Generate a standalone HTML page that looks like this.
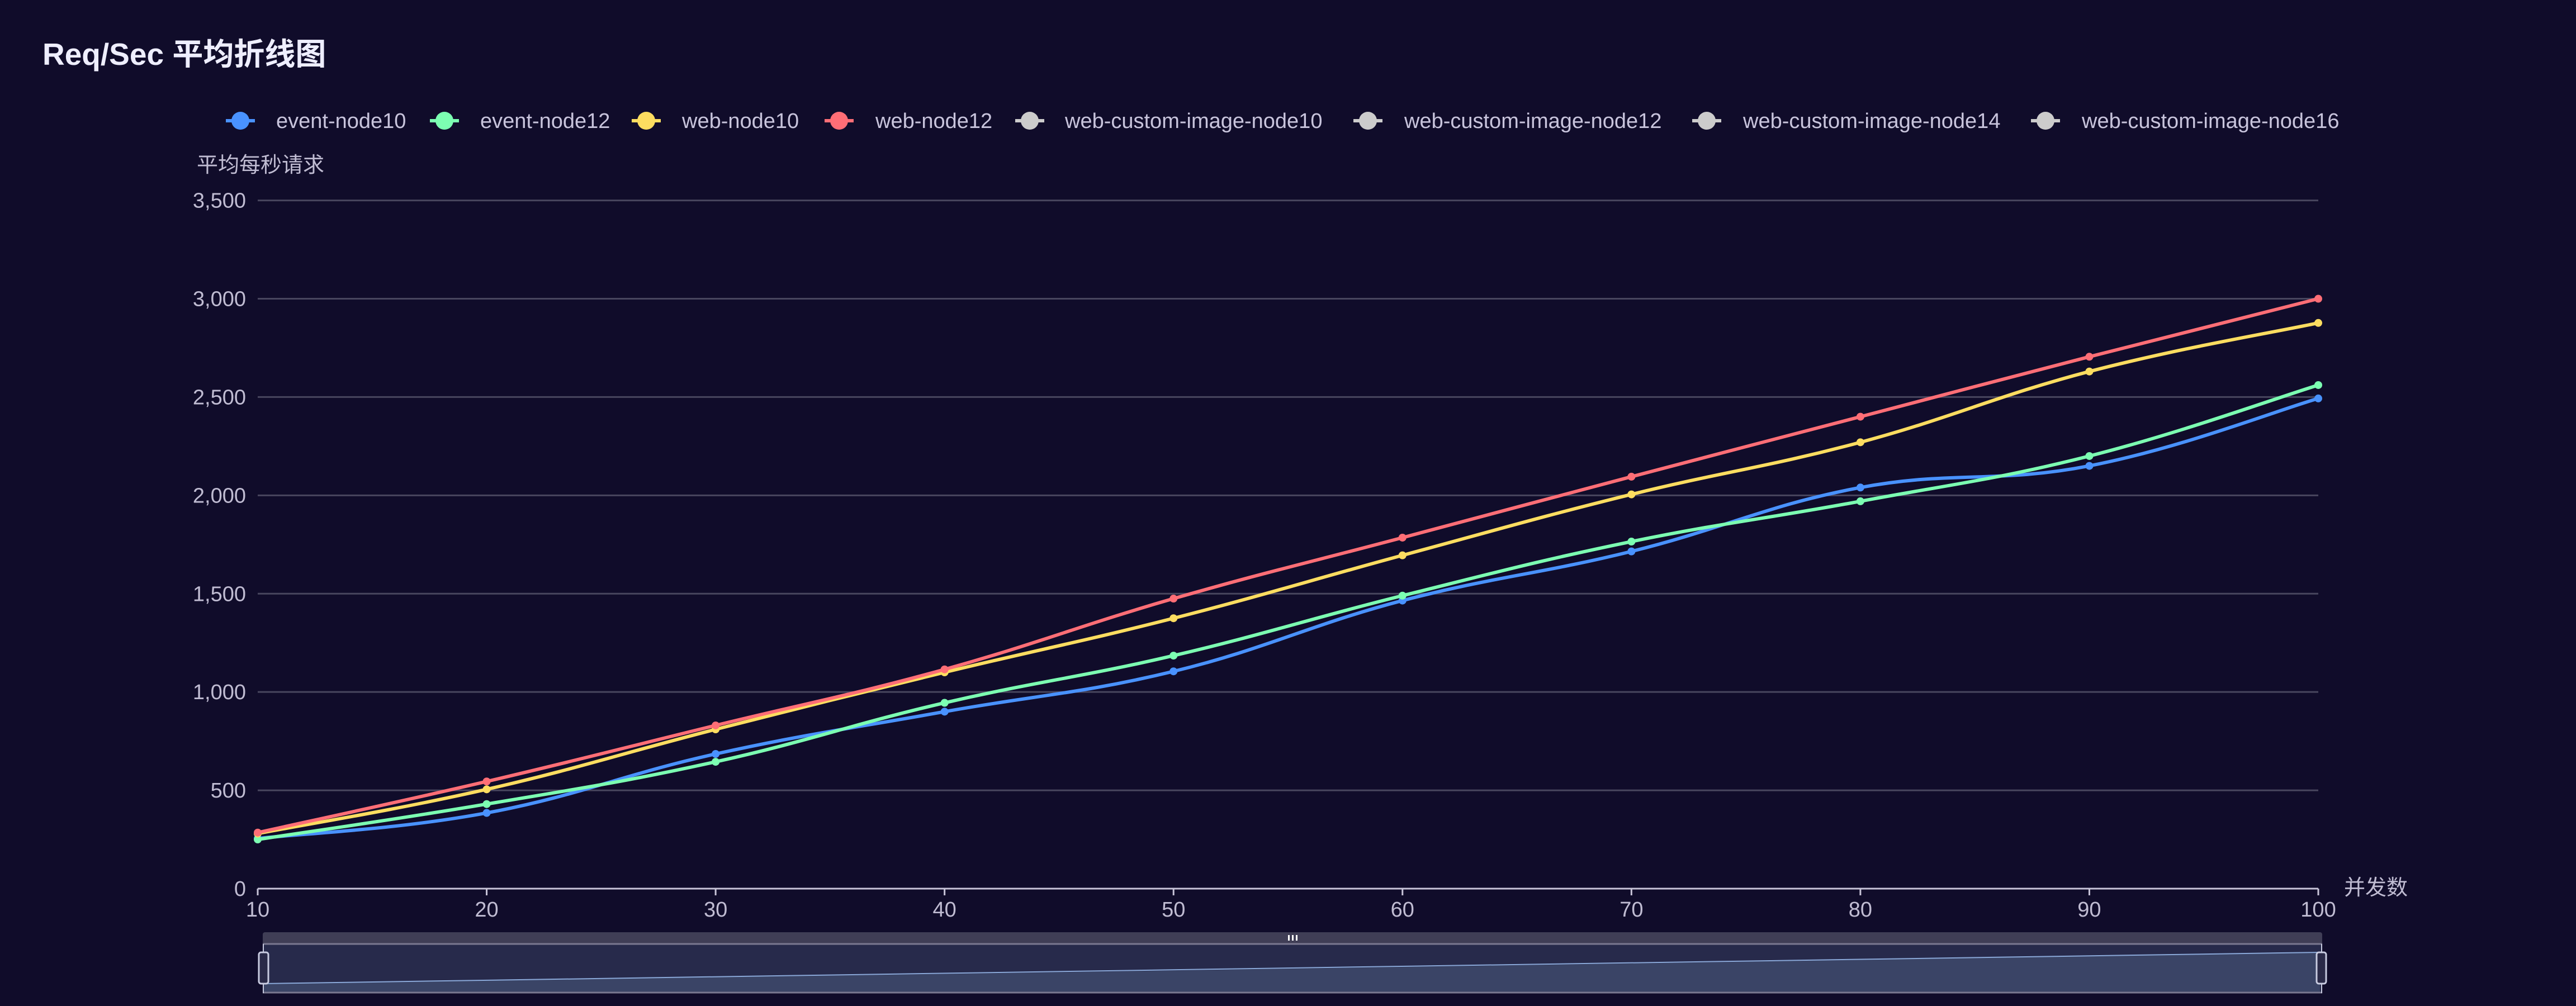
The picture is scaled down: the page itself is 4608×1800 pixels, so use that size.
<!DOCTYPE html>
<html><head><meta charset="utf-8"><style>
html,body{margin:0;padding:0;background:#100c2a;width:4608px;height:1800px;overflow:hidden}
svg{display:block}
text{font-family:"Liberation Sans","Noto Sans CJK SC",sans-serif}
</style></head><body>
<svg id="s" width="4608" height="1800" viewBox="0 0 4608 1800">
<rect width="4608" height="1800" fill="#100c2a"/>
<text x="76" y="116" font-size="55" font-weight="bold" fill="#eeeeff">Req/Sec 平均折线图</text>
<g font-size="38" fill="#c8c4dc">
<g><line x1="404" y1="216" x2="456" y2="216" stroke="#4992ff" stroke-width="6"/><circle cx="430" cy="216" r="16" fill="#4992ff"/><text x="494" y="229">event-node10</text></g>
<g><line x1="769" y1="216" x2="821" y2="216" stroke="#7cffb2" stroke-width="6"/><circle cx="795" cy="216" r="16" fill="#7cffb2"/><text x="859" y="229">event-node12</text></g>
<g><line x1="1130" y1="216" x2="1182" y2="216" stroke="#fddd60" stroke-width="6"/><circle cx="1156" cy="216" r="16" fill="#fddd60"/><text x="1220" y="229">web-node10</text></g>
<g><line x1="1475" y1="216" x2="1527" y2="216" stroke="#ff6e76" stroke-width="6"/><circle cx="1501" cy="216" r="16" fill="#ff6e76"/><text x="1566" y="229">web-node12</text></g>
<g><line x1="1816" y1="216" x2="1868" y2="216" stroke="#cccccc" stroke-width="6"/><circle cx="1842" cy="216" r="16" fill="#cccccc"/><text x="1905" y="229">web-custom-image-node10</text></g>
<g><line x1="2421" y1="216" x2="2473" y2="216" stroke="#cccccc" stroke-width="6"/><circle cx="2447" cy="216" r="16" fill="#cccccc"/><text x="2512" y="229">web-custom-image-node12</text></g>
<g><line x1="3027" y1="216" x2="3079" y2="216" stroke="#cccccc" stroke-width="6"/><circle cx="3053" cy="216" r="16" fill="#cccccc"/><text x="3118" y="229">web-custom-image-node14</text></g>
<g><line x1="3633" y1="216" x2="3685" y2="216" stroke="#cccccc" stroke-width="6"/><circle cx="3659" cy="216" r="16" fill="#cccccc"/><text x="3724" y="229">web-custom-image-node16</text></g>
</g>
<text x="352" y="308" font-size="38" fill="#c0bcd2">平均每秒请求</text>
<g id="grid" stroke="#48465e" stroke-width="3"></g>
<g id="ylab" font-size="38" fill="#c0bcd2" text-anchor="end"></g>
<line x1="461" y1="1590" x2="4147" y2="1590" stroke="#c8c4d8" stroke-width="3"/>
<g id="xt" stroke="#c8c4d8" stroke-width="3"></g>
<g id="xlab" font-size="38" fill="#c0bcd2" text-anchor="middle"></g>
<text x="4193" y="1601" font-size="38" fill="#c0bcd2">并发数</text>
<g id="series"></g>
<rect x="470" y="1668" width="3684" height="22" rx="4" fill="#403e56"/>
<rect x="470" y="1689" width="3684" height="88" fill="#272a4b"/>
<path d="M470 1760 Q2300 1735 4150 1704 L4150 1776 L470 1776Z" fill="#3a4466"/>
<path d="M470 1760 Q2300 1735 4150 1704" fill="none" stroke="#8aa8d8" stroke-width="2"/>
<line x1="470" y1="1689" x2="4154" y2="1689" stroke="#7a7890" stroke-width="3"/>
<line x1="470" y1="1776" x2="4154" y2="1776" stroke="#7a7890" stroke-width="3"/>
<line x1="471" y1="1689" x2="471" y2="1777" stroke="#c8cbe0" stroke-width="2"/>
<line x1="4153" y1="1689" x2="4153" y2="1777" stroke="#c8cbe0" stroke-width="2"/>
<rect x="463" y="1704" width="17" height="56" rx="4" fill="#2a2a48" stroke="#c8cbe0" stroke-width="3"/>
<rect x="4144" y="1704" width="17" height="56" rx="4" fill="#2a2a48" stroke="#c8cbe0" stroke-width="3"/>
<g fill="#ffffff"><rect x="2304" y="1673" width="3" height="10"/><rect x="2311" y="1673" width="3" height="10"/><rect x="2318" y="1673" width="3" height="10"/></g>
</svg>
<script>
var NS="http://www.w3.org/2000/svg";
function el(t,a,p,txt){var e=document.createElementNS(NS,t);for(var k in a)e.setAttribute(k,a[k]);if(txt!=null)e.textContent=txt;document.getElementById(p).appendChild(e);return e;}
var X0=461,X1=4147,Y0=1590,YT=358.6;
function px(i){return X0+(X1-X0)*i/9;}
function py(v){return Y0-(Y0-YT)*v/3500;}
var labs=["0","500","1,000","1,500","2,000","2,500","3,000","3,500"];
for(var i=0;i<8;i++){var y=py(i*500);if(i>0)el("line",{x1:X0,y1:y,x2:X1,y2:y},"grid");el("text",{x:440,y:y+13},"ylab",labs[i]);}
for(var i=0;i<10;i++){var x=px(i);el("line",{x1:x,y1:1590,x2:x,y2:1602},"xt");el("text",{x:x,y:1640},"xlab",String((i+1)*10));}
var S=[
["#4992ff",[255,385,685,900,1105,1465,1715,2040,2150,2493]],
["#7cffb2",[250,430,645,945,1185,1490,1765,1970,2200,2561]],
["#fddd60",[280,505,810,1100,1375,1695,2005,2270,2630,2877]],
["#ff6e76",[285,545,830,1115,1475,1785,2095,2400,2705,3000]]];
S.forEach(function(s){
 var p=s[1].map(function(v,i){return [px(i),py(v)];});
 var d="M"+p[0][0]+" "+p[0][1];
 for(var i=0;i<p.length-1;i++){
  var a=p[Math.max(0,i-1)],b=p[i],c=p[i+1],e=p[Math.min(p.length-1,i+2)],t=0.2;
  d+=" C"+(b[0]+(c[0]-a[0])*t)+" "+(b[1]+(c[1]-a[1])*t)+" "+(c[0]-(e[0]-b[0])*t)+" "+(c[1]-(e[1]-b[1])*t)+" "+c[0]+" "+c[1];
 }
 el("path",{d:d,fill:"none",stroke:s[0],"stroke-width":6},"series");
 p.forEach(function(q){el("circle",{cx:q[0],cy:q[1],r:7,fill:s[0]},"series");});
});
</script>
</body></html>
